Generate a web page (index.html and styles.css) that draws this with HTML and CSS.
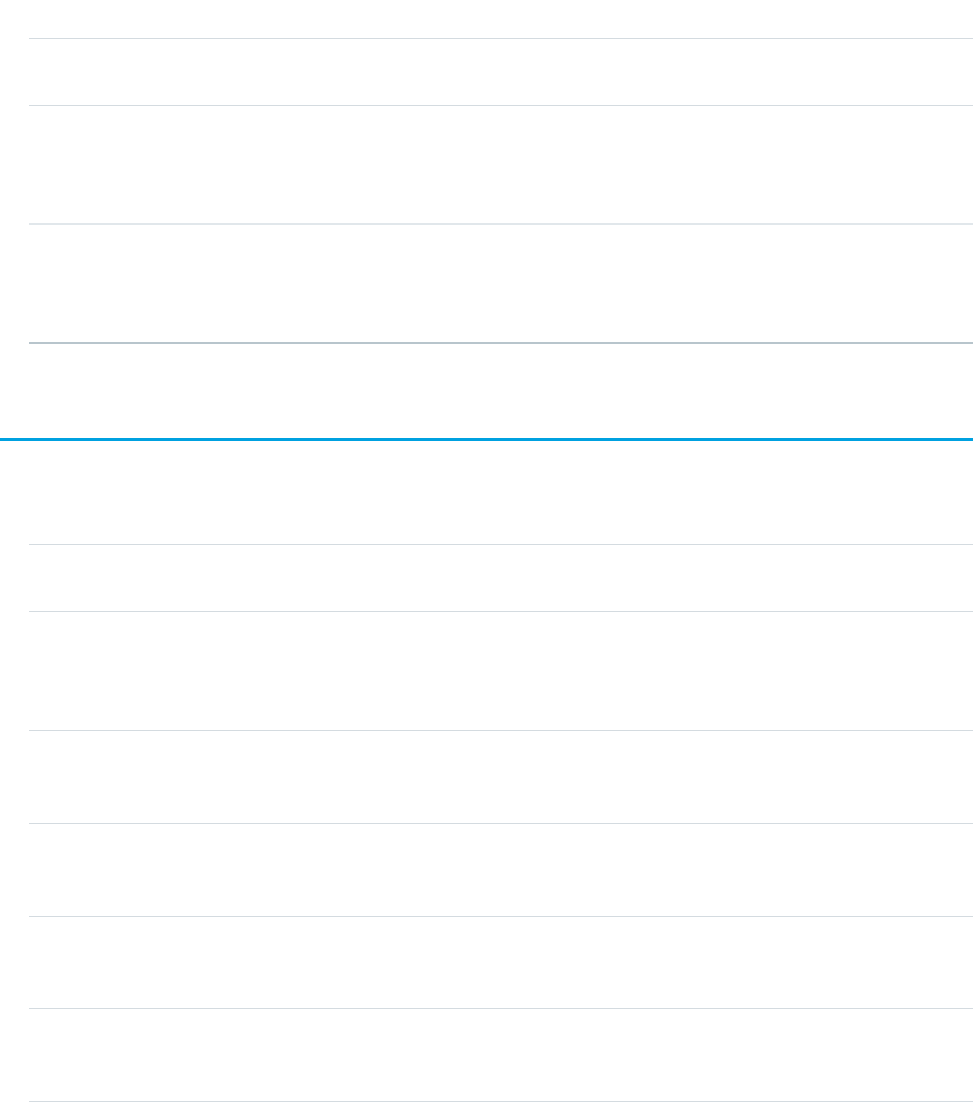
FILE: index.html
```html
<!DOCTYPE html>
<html>
<head>
<meta charset="utf-8">
<link rel="stylesheet" href="styles.css">
</head>
<body>
<div class="page">
  <section class="table table-top">
    <div class="row r1"></div>
    <div class="row r2"></div>
    <div class="row r3 thick-light"></div>
    <div class="row r4 thick-dark"></div>
  </section>
  <div class="divider"></div>
  <section class="table table-bottom">
    <div class="row b1"></div>
    <div class="row b2"></div>
    <div class="row b3"></div>
    <div class="row b4"></div>
    <div class="row b5"></div>
    <div class="row b6"></div>
    <div class="row b7"></div>
  </section>
</div>
</body>
</html>
```
FILE: styles.css
```css
html, body {
  margin: 0;
  padding: 0;
  background: #ffffff;
  font-family: "Liberation Sans", Arial, sans-serif;
}
.page {
  width: 973px;
  overflow: hidden;
}
.table {
  display: flex;
  flex-direction: column;
  padding-left: 29px;
}
.table-top { padding-top: 38px; }
.table-bottom { padding-top: 103px; }
.row {
  box-sizing: border-box;
  border-top: 1px solid #d4dbe0;
}
.r1 { height: 67px; }
.r2 { height: 118px; }
.r3 { height: 119px; }
.r4 { height: 96px; }
.thick-light { border-top: 2px solid #e1e7eb; }
.thick-dark { border-top: 2px solid #b8c5cc; }
.divider {
  height: 3px;
  background: #00a1e0;
}
.b1 { height: 67px; }
.b2 { height: 119px; }
.b3 { height: 93px; }
.b4 { height: 93px; }
.b5 { height: 92px; }
.b6 { height: 93px; }
.b7 { height: 1px; }
```
